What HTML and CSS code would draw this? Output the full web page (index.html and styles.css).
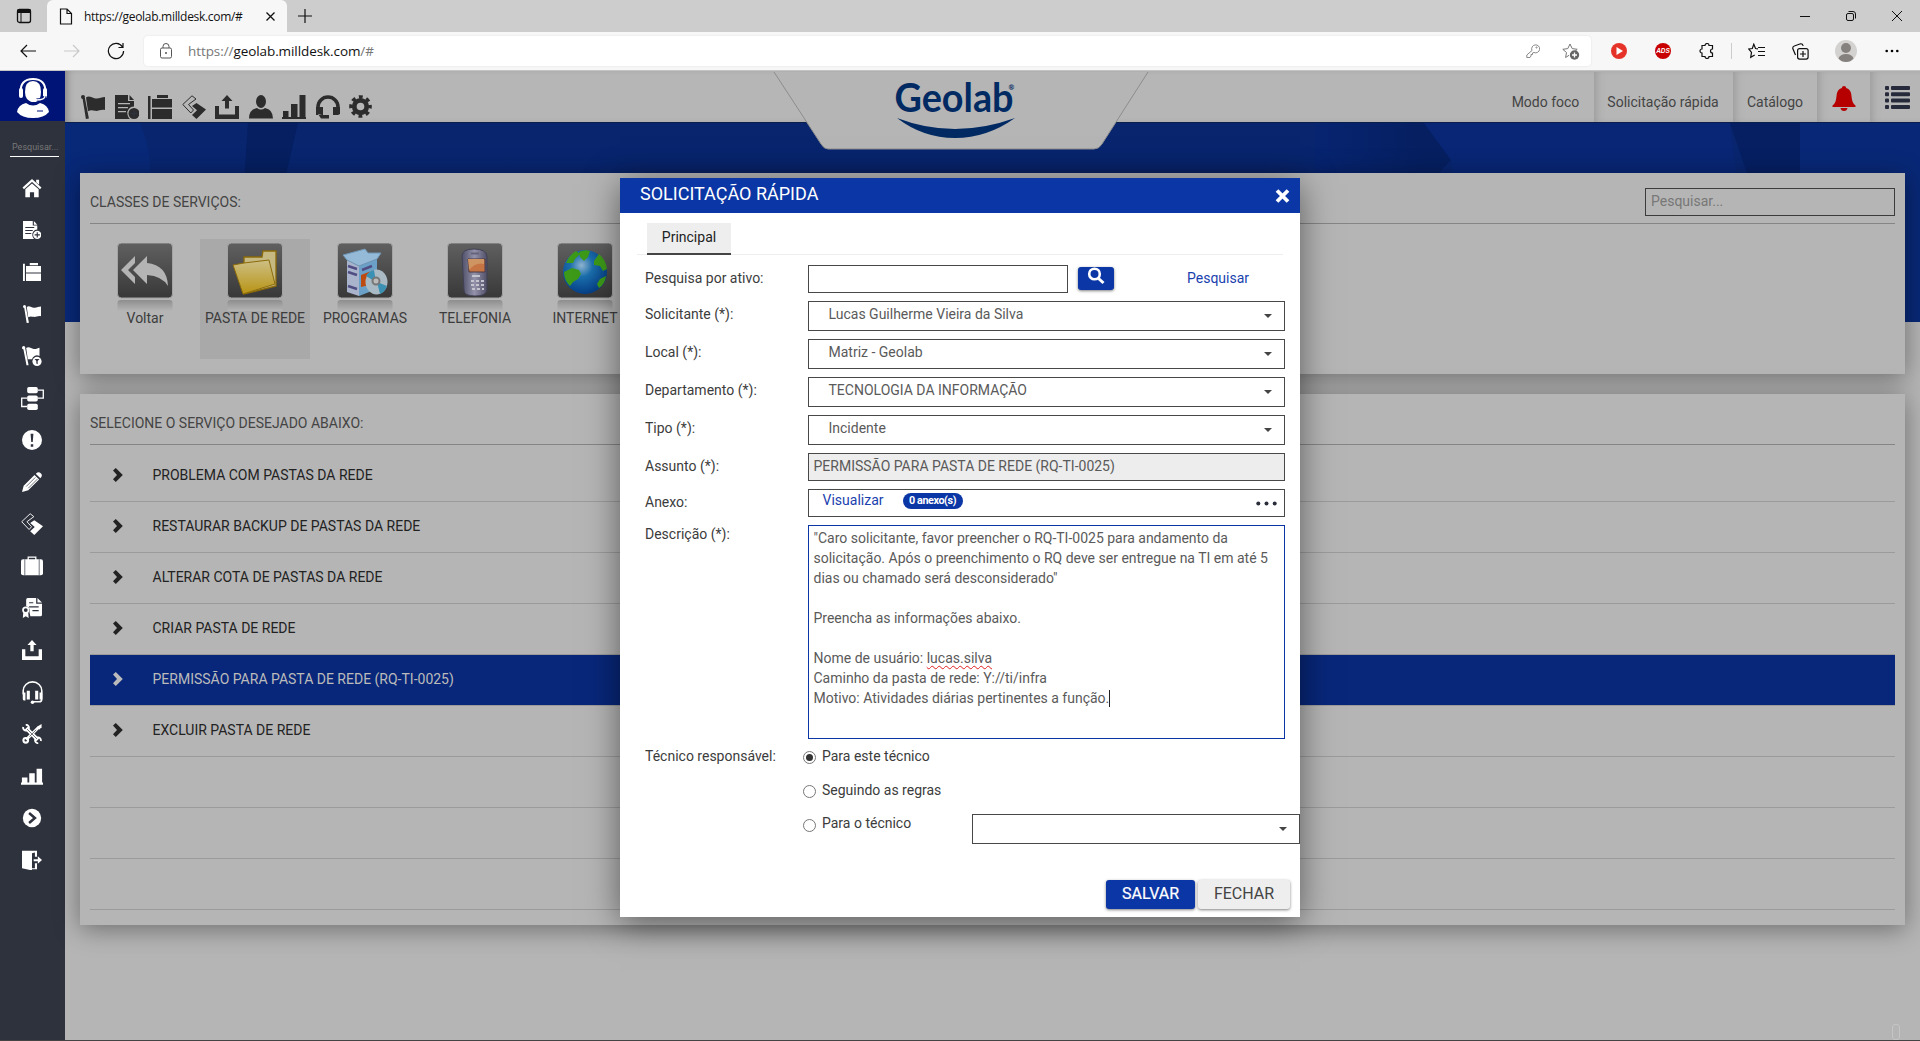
FILE: index.html
```html
<!DOCTYPE html>
<html lang="pt-BR">
<head>
<meta charset="utf-8">
<title>geolab.milldesk.com</title>
<link rel="stylesheet" href="styles.css">
</head>
<body>
<svg class="defs" width="0" height="0">
  <defs>
    <linearGradient id="tile" x1="0" y1="0" x2="0" y2="1"><stop offset="0" stop-color="#606060"/><stop offset="1" stop-color="#383838"/></linearGradient>
    <linearGradient id="refl" x1="0" y1="0" x2="0" y2="1"><stop offset="0" stop-color="#8e8e8e"/><stop offset="1" stop-color="#b5b5b5"/></linearGradient>
    <linearGradient id="gold" x1="0" y1="0" x2="0" y2="1"><stop offset="0" stop-color="#cdbf85"/><stop offset="1" stop-color="#b89414"/></linearGradient>
    <radialGradient id="sea" cx=".42" cy=".35" r=".65"><stop offset="0" stop-color="#8fb4cf"/><stop offset=".4" stop-color="#1a6eac"/><stop offset="1" stop-color="#063f86"/></radialGradient>
    <linearGradient id="fone" x1="0" y1="0" x2="1" y2="0"><stop offset="0" stop-color="#50506a"/><stop offset=".5" stop-color="#9392aa"/><stop offset="1" stop-color="#504f68"/></linearGradient>
    <linearGradient id="shade" x1="0" y1="0" x2="1" y2="0"><stop offset="0" stop-color="#072471"/><stop offset=".8" stop-color="#051f60"/><stop offset="1" stop-color="#051f60"/></linearGradient>
  </defs>
  <symbol id="frame" viewBox="0 0 56 70">
    <rect x=".5" y="0" width="55" height="55" rx="4" fill="url(#tile)" stroke="#a4a4a4" stroke-width="1"/>
    <path d="M.5 60q0-3 3-3h49q3 0 3 3v8H.5z" fill="url(#refl)"/>
  </symbol>
  <symbol id="flag" viewBox="0 0 24 24"><circle cx="2" cy="2" r="2"/><path d="M1.500 3h2.400l4 20.500l-3 .5zM5 2.500c3-2.500 6 .5 9.500 1c4 .4 6-1.500 9.500-1.500v13c-4-1-7 1.500-10 .8c-3-.8-4-1-7 .4z"/></symbol>
  <symbol id="doc" viewBox="0 0 24 24"><path fill-rule="evenodd" d="M0 0h13v6h6v5.500a6.500 6.500 0 0 0-6.500 8c.4 2 1.500 3.500 2.500 4.500H0zM3 8v1.300h12V8zm0 4v1.300h10V12zm0 4v1.300h8V16z"/><path d="M14.500 0 19 5h-4.500z"/><circle cx="19" cy="18.500" r="5.500"/><path class="cut" d="M19 15v7M15.500 18.500h7"/></symbol>
  <symbol id="case" viewBox="0 0 24 24"><path d="M0 1h2.500v23H0zM9 0h11v3H9zM4 4h20v8.500H4zM4 14h20v10H4z"/></symbol>
  <symbol id="tag" viewBox="0 0 24 24"><path d="M10 .8.8 9.500l8 8.500 2.700-3L6.500 9.500 14 4z" fill="none" stroke="currentColor" stroke-width="1"/><path d="M14.500 8 24 14.500 14.500 24 10 20l5-4.800-5-4.200z"/></symbol>
  <symbol id="up" viewBox="0 0 24 24"><path d="M0 11h4v8.500h16V11h4v13H0zM12 0l5.500 6h-3.500v7.500h-4V6H6.500z"/></symbol>
  <symbol id="user" viewBox="0 0 24 24"><ellipse cx="12" cy="6.500" rx="5" ry="6.500"/><path d="M0 23.500q0-9 8-10.500 4 3 8 0 8 1.500 8 10.500z"/></symbol>
  <symbol id="bars" viewBox="0 0 24 24"><path d="M0 22h24v2H0zM1 16h5.500v6H1zM9 9h6.500v13H9zM17.500 0h6v22h-6z"/></symbol>
  <symbol id="head" viewBox="0 0 24 24"><path d="M2 16v-4a10 10 0 0 1 20 0v7" fill="none" stroke="currentColor" stroke-width="3.500"/><path d="M0 12h7v8H0zM17 12h7v7l-2 1h-5zM2 19l3 4.500h8V20H6z"/></symbol>
  <symbol id="gear" viewBox="0 0 24 24"><circle cx="12" cy="12" r="6.500" fill="none" stroke="currentColor" stroke-width="5"/><circle cx="12" cy="12" r="10" fill="none" stroke="currentColor" stroke-width="3.600" stroke-dasharray="4 3.854" stroke-dashoffset="2"/></symbol>
  <symbol id="house" viewBox="0 0 24 24"><path d="M1.500 12.500 12 3l10.500 9.500" fill="none" stroke="currentColor" stroke-width="2.600"/><path d="M17 2h3.500v6L17 5zM12 6.500l8 7V23h-5.500v-6h-5v6H4v-9.500z"/></symbol>
  <symbol id="flagt" viewBox="0 0 24 24"><circle cx="2" cy="2" r="2"/><path d="M1.500 3h2.400l4 20h-2.500zM5 2.500c3-2.500 6 .5 9 1 3 .4 5-1 7-1.500v10a6 6 0 0 0-9 4l-5 0z"/><circle cx="18" cy="18.500" r="5.500"/><path class="dark" d="M15 15.500h6L18.800 18v4l-1.600-1v-3z"/></symbol>
  <symbol id="flow" viewBox="0 0 26 26"><g fill="none" stroke="currentColor" stroke-width="1.500"><path d="M19 3.500h6.200v9H19M7 12.500H.8V22H7"/></g><rect x="7" width="12" height="7" rx="2"/><rect x="7" y="9.500" width="12" height="7" rx="2"/><rect x="7" y="19" width="12" height="7" rx="2"/></symbol>
  <symbol id="bang" viewBox="0 0 24 24"><circle cx="12" cy="12" r="12"/><path class="dark" d="M10.300 4.500h3.400l-.8 10h-1.800zM10.500 17h3v3h-3z"/></symbol>
  <symbol id="pencil" viewBox="0 0 24 24"><path d="M0 24l2-7.500L15 3.500l5.500 5.500L7.500 22zM16.500 2l2-1.500q2-1 4 1t1 4L22 7.500z"/><path class="cut2" d="M5 17.500 16 6.500M7.500 19.500l11-11"/></symbol>
  <symbol id="bag" viewBox="0 0 26 24"><path d="M8.500 5V1.500h9V5" fill="none" stroke="currentColor" stroke-width="1.500"/><rect y="4" width="26" height="19" rx="2.500"/><path class="cut2" d="M4.500 4v19M21.500 4v19"/></symbol>
  <symbol id="cert" viewBox="0 0 24 24"><path fill-rule="evenodd" d="M5 2q0-2 2-2h10v7h7v13q0 2-2 2H10l-1-5q1-6-4-7zM8.500 5v1.300h5V5zm0 5v1.300H20V10zm4 4.500v1.300H20v-1.300z"/><path d="M18.500 0 24 5.500h-5.500z"/><circle cx="4.500" cy="14.500" r="3.300" fill="none" stroke="currentColor" stroke-width="2"/><path d="M1.500 18h6l.5 6-3.500-2L1 24z"/></symbol>
  <symbol id="head2" viewBox="0 0 24 26"><path d="M1.500 15v-4a10.500 10 0 0 1 21 0v9q0 3.500-3 3.500H13" fill="none" stroke="currentColor" stroke-width="1.800"/><path d="M1 13h3v9H2q-1-1-1-2zM5.500 11H9v10H5.500zM15 11h3.500v10H15zM20 13h3v8h-3z"/><circle cx="12" cy="24" r="2"/></symbol>
  <symbol id="tools" viewBox="0 0 24 24"><g fill="none" stroke="currentColor"><path stroke-width="4.500" d="M5 5l14 14"/><path stroke-width="3.500" d="M20 4 5 19"/><path stroke-width="2.200" d="M1.500 3.500a3.500 3.500 0 1 0 3-2.500M22.500 20.500a3.500 3.500 0 1 0-3 2.500"/><circle cx="4.500" cy="19.500" r="2.800" stroke-width="2.500"/></g><path d="M18.500 3l5-3v4l-3 3z"/><path class="cut2" d="M6 6l12 12M17 7l-8 8"/></symbol>
  <symbol id="sbars" viewBox="0 0 24 24"><path d="M0 19h24v2.500H0zM1 13.500h6V20H1zM9 9h6v11H9zM17 4h6v16h-6z"/></symbol>
  <symbol id="go" viewBox="0 0 24 24"><circle cx="12" cy="12" r="11"/><path d="M8.500 6l7 6-7 6" class="dline"/></symbol>
  <symbol id="exit" viewBox="0 0 24 24"><path d="M0 1h18v7h-2.500V3L12 4v18h3.500v-6H18v7h-6v1.500L0 22z"/><path d="M14 11h5V7.500L24 12l-5 4.500V13.500h-5z"/></symbol>
  <symbol id="chev" viewBox="0 0 10 14"><path d="M0 2.500 2.800 0l7 7-7 7L0 11.300 4 7z"/></symbol>
</svg>

<div class="tabstrip">
  <svg class="tabact" width="16" height="16" viewBox="0 0 16 16"><rect x="1.500" y="1.500" width="13" height="13" rx="2" fill="none" stroke="#111" stroke-width="1.300"/><path d="M1 1.500h14V5H1z" fill="#111"/><path d="M5 5v9" stroke="#111"/></svg>
  <div class="tab">
    <svg width="14" height="17" viewBox="0 0 14 17"><path d="M1.500 1H8l4.500 4.500V16h-11zM8 1v4.500h4.500" fill="none" stroke="#111" stroke-width="1.200"/></svg>
    <span>https://geolab.milldesk.com/#</span>
    <svg width="9" height="9" viewBox="0 0 9 9"><path d="M.5.5l8 8M8.500.5l-8 8" stroke="#111" stroke-width="1.300"/></svg>
  </div>
  <svg class="plus" width="14" height="14" viewBox="0 0 14 14"><path d="M7 0v14M0 7h14" stroke="#111" stroke-width="1.200"/></svg>
  <div class="winctl">
    <svg width="10" height="10" viewBox="0 0 10 10"><path d="M0 5.500h10" stroke="#111"/></svg>
    <svg width="10" height="10" viewBox="0 0 10 10" fill="none" stroke="#111"><rect x=".5" y="2.500" width="7" height="7" rx="1.500"/><path d="M2.500.5H7q2.500 0 2.500 2.500v4.500"/></svg>
    <svg width="10" height="10" viewBox="0 0 10 10"><path d="M0 0l10 10M10 0 0 10" stroke="#111"/></svg>
  </div>
</div>

<div class="toolbar">
  <svg width="16" height="14" viewBox="0 0 16 14" class="back"><path d="M16 7H1M7 1 1 7l6 6" fill="none" stroke="#111" stroke-width="1.200"/></svg>
  <svg width="16" height="14" viewBox="0 0 16 14" class="fwd"><path d="M0 7h15M9 1l6 6-6 6" fill="none" stroke="#c9c9c9" stroke-width="1.200"/></svg>
  <svg width="18" height="18" viewBox="0 0 18 18" class="reload"><path d="M15.500 5A7.600 7.600 0 1 0 16.600 9M16 1v4.500h-4.500" fill="none" stroke="#111" stroke-width="1.200"/></svg>
  <div class="address">
    <svg width="12" height="16" viewBox="0 0 12 16"><rect x=".5" y="5" width="11" height="10" rx="1.500" fill="none" stroke="#555"/><path d="M3 5V3.500a3 3 0 0 1 6 0V5" fill="none" stroke="#555"/><circle cx="6" cy="10" r="1" fill="#555"/></svg>
    <span class="url"><i>https://</i>geolab.milldesk.com<i>/#</i></span>
    <svg class="key" width="14" height="14" viewBox="0 0 14 14" fill="none" stroke="#888"><path d="M6 6.500A4 4 0 1 1 8 8.500L6.500 9v1.500H5V12l-1 1.500H.8V11z"/><circle cx="10.500" cy="3.500" r=".6"/></svg>
    <svg class="fav" width="18" height="17" viewBox="0 0 18 17"><path d="M8 1l2.200 4.600 5 .7-3.500 3.400M7 12.300 3.600 14.500l.9-5L.8 6.300l5-.7L8 1" fill="none" stroke="#777"/><circle cx="12.500" cy="12" r="4.700" fill="#666"/><path d="M12.500 9.500v5M10 12h5" stroke="#fff" stroke-width="1.300"/></svg>
  </div>
  <div class="ext">
    <svg width="16" height="16" viewBox="0 0 16 16"><circle cx="8" cy="8" r="8" fill="#e5332a"/><path d="M5.500 4l6.500 4-6.500 4z" fill="#fff"/></svg>
    <span class="ads">ADS</span>
    <svg class="puzzle" width="16" height="16" viewBox="0 0 16 16"><path d="M3 2.500h3a2 2 0 0 1 4 0h3.500v3.500a1.800 1.800 0 1 0 0 4v3.500H10a2 2 0 0 1-4 0H3V10a2 2 0 0 1 0-4z" fill="none" stroke="#111" stroke-width="1.200"/></svg>
    <b class="vsep"></b>
    <svg class="star" width="17" height="16" viewBox="0 0 17 16"><path d="M10 5.800 7.500 5.500 5.800 1.200 4.300 5.500.8 6l2.700 3.300-.8 5 4-2.300M10 4.500h7M10 8.500h7M10 12.500h7" fill="none" stroke="#111" stroke-width="1.200"/></svg>
    <svg class="coll" width="17" height="17" viewBox="0 0 17 17"><rect x="5.600" y="5.600" width="10.500" height="10.500" rx="2" fill="none" stroke="#111" stroke-width="1.200"/><path d="M3.500 12 .8 5.500Q.5 3.500 2.300 3L8.500.8q2-.3 2.700 2M11 8v6M8 11h6" fill="none" stroke="#111" stroke-width="1.200"/></svg>
    <svg class="avatar" width="22" height="22" viewBox="0 0 22 22"><circle cx="11" cy="11" r="11" fill="#d4d2d0"/><circle cx="11" cy="8" r="5" fill="#85817e"/><path d="M3.500 18.500q1.500-4.500 7.500-4.500t7.500 4.500Q15.500 22 11 22t-7.500-3.500" fill="#85817e"/></svg>
    <svg width="14" height="4" viewBox="0 0 14 4"><circle cx="1.700" cy="2" r="1.300"/><circle cx="7" cy="2" r="1.300"/><circle cx="12.300" cy="2" r="1.300"/></svg>
  </div>
</div>

<div class="app">
  <nav class="side">
    <div class="brand"><svg width="32" height="40" viewBox="0 0 32 40"><path d="M8 14Q8 3 16 3t8 11-8 10-8-10" fill="#fff"/><path d="M3.500 15Q3 1 16 1t12.500 14" fill="none" stroke="#fff" stroke-width="2"/><rect x="2" y="10" width="4" height="10" rx="2" fill="#fff"/><rect x="26" y="10" width="4" height="10" rx="2" fill="#fff"/><path d="M28 18q0 4-9 4" fill="none" stroke="#001478" stroke-width="3"/><path d="M28 18q0 4-9 4" fill="none" stroke="#fff" stroke-width="1.400"/><rect x="13" y="20" width="7" height="4" rx="2" fill="#fff"/><path d="M0 34q1-7 9-9 7 5 14 0 8 2 9 9-5 6-16 6T0 34" fill="#fff"/><path d="M20 33h6" stroke="#001478"/></svg></div>
    <div class="find">Pesquisar...</div>
    <a><svg><use href="#house"/></svg></a>
    <a><svg class="s"><use href="#doc"/></svg></a>
    <a><svg class="s"><use href="#case"/></svg></a>
    <a><svg class="s"><use href="#flag"/></svg></a>
    <a><svg><use href="#flagt"/></svg></a>
    <a><svg class="l"><use href="#flow"/></svg></a>
    <a><svg><use href="#bang"/></svg></a>
    <a><svg><use href="#pencil"/></svg></a>
    <a><svg class="m"><use href="#tag"/></svg></a>
    <a><svg class="m"><use href="#bag"/></svg></a>
    <a><svg><use href="#cert"/></svg></a>
    <a><svg><use href="#up"/></svg></a>
    <a><svg class="l"><use href="#head2"/></svg></a>
    <a><svg><use href="#tools"/></svg></a>
    <a><svg class="m"><use href="#sbars"/></svg></a>
    <a><svg><use href="#go"/></svg></a>
    <a><svg><use href="#exit"/></svg></a>
  </nav>

  <main class="main">
    <header class="top">
      <div class="quick">
        <svg><use href="#flag"/></svg><svg><use href="#doc"/></svg><svg><use href="#case"/></svg><svg><use href="#tag"/></svg><svg><use href="#up"/></svg><svg><use href="#user"/></svg><svg><use href="#bars"/></svg><svg><use href="#head"/></svg><svg class="g"><use href="#gear"/></svg>
      </div>
      <div class="menu">
        <span class="c1">Modo foco</span><span class="c2">Solicitação rápida</span><span class="c3">Catálogo</span>
        <span class="c4"><svg width="24" height="25" viewBox="0 0 24 25"><path d="M12 0q2 0 2.200 2 5 1.500 5.300 8 .3 7 4 9.500V21H.5v-1.500q3.700-2.500 4-9.500Q4.800 3.500 9.800 2 10 0 12 0M8.500 22h7q-.5 3-3.500 3t-3.500-3" fill="#b60000"/></svg></span>
        <span class="c5"><svg width="25" height="23" viewBox="0 0 25 23" fill="#262a3a"><g id="lr"><rect width="4" height="4" rx="1"/><rect x="6" width="19" height="4" rx="1"/></g><use href="#lr" y="6.300"/><use href="#lr" y="12.600"/><use href="#lr" y="19"/></svg></span>
      </div>
    </header>
    <div class="banner"><svg width="1855" height="199" viewBox="0 0 1855 199"><path d="M0 0h75q18 45 5 70L60 199H0z" fill="#082878"/><path d="M183 0h50l-14 60h-40z" fill="#051f60"/><path d="M1250 0h109l27 37-20 22h-116z" fill="url(#shade)"/><path d="M1359 0h306l25 199h-270l-34-162z" fill="#082675"/><path d="M1665 0h70v199h-40l-10-140z" fill="#051f62"/><path d="M1735 0h120v199h-120z" fill="#082877"/></svg></div>
    <svg class="notch" width="400" height="84" viewBox="0 0 400 84">
      <path d="M14 1 61 73q3 5 7 5h266q5 0 8-5L388 1" fill="#b5b5b5"/>
      <path d="M14 1 61 73q3 5 7 5h266q5 0 8-5L388 1" fill="none" stroke="#8d8d8d" stroke-width="1"/>
      <text x="134.500" y="41" class="logo"><tspan textLength="119" lengthAdjust="spacingAndGlyphs">Geolab</tspan><tspan class="reg" dx="-5" dy="-22">®</tspan></text>
      <path d="M137 47q57 22 118 0-28 20-60 20t-58-20" fill="#012a63"/>
    </svg>

    <section class="panel classes">
      <div class="phead"><h2>CLASSES DE SERVIÇOS:</h2><div class="psearch">Pesquisar...</div></div>
      <div class="tiles">
        <div class="tile"><svg viewBox="0 0 56 70"><use href="#frame"/><path d="M4 27 18 13v7l-7 7 7 7v7zM16 27 30 13v7q20 2 21 23-6-10-21-11v9z" fill="#b4b4b4"/></svg>Voltar</div>
        <div class="tile on"><svg viewBox="0 0 56 70"><use href="#frame"/><path d="M17 14h18l1-6h13v35L17 51z" fill="#c5b881" stroke="#8b6a0a" stroke-width="1.300"/><path d="M6 22l11-2 25-3 6 24-32 10z" fill="url(#gold)" stroke="#8b6a0a"/></svg>PASTA DE REDE</div>
        <div class="tile"><svg viewBox="0 0 56 70"><use href="#frame"/><path d="M10 17l12 6v30l-12-4z" fill="#a9b4cc"/><path d="M22 23l18-7v30l-18 7z" fill="#6ba1c8"/><path d="M10 17 6 12l22-6 3 4 13 0-4 6-18 7z" fill="#95bad8" stroke="#7196b5"/><path d="M24 32l13-5v14l-13 3z" fill="#bd4a10"/><path d="M11 23l9 3M11 29l9 3M11 43l9 3M25 27l10-4" stroke="#514d83" stroke-width="2.500"/><ellipse cx="39.500" cy="39" rx="11" ry="12.500" fill="#aabac4"/><path d="M39 39 29 33q3-5 8-6zM40 39l10 4q-2 6-7 8z" fill="#3b91b4"/><circle cx="39" cy="38" r="3.500" fill="#bbb" stroke="#777" stroke-width="2"/></svg>PROGRAMAS</div>
        <div class="tile"><svg viewBox="0 0 56 70"><use href="#frame"/><path d="M15 13q0-7 12-7t13 7v34q-1 6-12 6-11 0-11-6z" fill="url(#fone)" stroke="#414155"/><path d="M21 16h17v13H22z" fill="#c77445" stroke="#4b3942"/><path d="M22 27q7-8 15-6v-5H21z" fill="#ce9563"/><path d="M25 33h8M24 38h3m2 0h3m2 0h3M24 42h3m2 0h3m2 0h3M25 46h3m2 0h3m2 0h2" stroke="#c4c4cf" stroke-width="2"/><path d="M24 10.500h8" stroke="#65647c" stroke-width="2"/></svg>TELEFONIA</div>
        <div class="tile"><svg viewBox="0 0 56 70"><use href="#frame"/><circle cx="28" cy="29" r="22" fill="url(#sea)"/><path d="M9 20q3-8 10-12l4 3-5 5-2 4zM7 29l8-4 7 2 2 4-3 5-5 3-3 4q-6-6-6-14M22 9q6-3 11-1l-2 6-4 4-4-4zM37 18l5-7q7 6 8 15l-4 2-3-5-6-1zM43 36l6-3q-1 8-7 12l-2-4z" fill="#3d9a18"/></svg>INTERNET</div>
      </div>
    </section>

    <section class="panel services">
      <div class="phead"><h2>SELECIONE O SERVIÇO DESEJADO ABAIXO:</h2></div>
      <ul>
        <li><svg><use href="#chev"/></svg>PROBLEMA COM PASTAS DA REDE</li>
        <li><svg><use href="#chev"/></svg>RESTAURAR BACKUP DE PASTAS DA REDE</li>
        <li><svg><use href="#chev"/></svg>ALTERAR COTA DE PASTAS DA REDE</li>
        <li><svg><use href="#chev"/></svg>CRIAR PASTA DE REDE</li>
        <li class="sel"><svg><use href="#chev"/></svg>PERMISSÃO PARA PASTA DE REDE (RQ-TI-0025)</li>
        <li><svg><use href="#chev"/></svg>EXCLUIR PASTA DE REDE</li>
        <li></li><li></li><li></li>
      </ul>
    </section>
    <div class="pill"></div>
  </main>
</div>

<div class="modal">
  <div class="mhead">SOLICITAÇÃO RÁPIDA<svg width="15" height="14" viewBox="0 0 15 14"><path d="M2 1.500l11 11M13 1.500l-11 11" stroke="#fff" stroke-width="3.800"/></svg></div>
  <div class="tabs"><span>Principal</span></div>
  <div class="form">
    <div class="row h28"><label>Pesquisa por ativo:</label><div class="box short"></div><div class="lens"><svg width="18" height="18" viewBox="0 0 18 18"><circle cx="7.500" cy="7" r="5.300" fill="none" stroke="#fff" stroke-width="2.600"/><path d="M11 11l5.500 5" stroke="#fff" stroke-width="3"/></svg></div><span class="link">Pesquisar</span></div>
    <div class="row"><label>Solicitante (*):</label><div class="box dd">Lucas Guilherme Vieira da Silva</div></div>
    <div class="row"><label>Local (*):</label><div class="box dd">Matriz - Geolab</div></div>
    <div class="row"><label>Departamento (*):</label><div class="box dd">TECNOLOGIA DA INFORMAÇÃO</div></div>
    <div class="row"><label>Tipo (*):</label><div class="box dd">Incidente</div></div>
    <div class="row h28"><label>Assunto (*):</label><div class="box off">PERMISSÃO PARA PASTA DE REDE (RQ-TI-0025)</div></div>
    <div class="row h28"><label>Anexo:</label><div class="box files"><span class="link">Visualizar</span><span class="badge">0 anexo(s)</span><svg width="21" height="5" viewBox="0 0 21 5" fill="#2a2d3a"><circle cx="2.300" cy="2.500" r="2"/><circle cx="10.500" cy="2.500" r="2"/><circle cx="18.700" cy="2.500" r="2"/></svg></div></div>
    <div class="row desc"><label>Descrição (*):</label><div class="box area">"Caro solicitante, favor preencher o RQ-TI-0025 para andamento da<br>solicitação. Após o preenchimento o RQ deve ser entregue na TI em até 5<br>dias ou chamado será desconsiderado"<br><br>Preencha as informações abaixo.<br><br>Nome de usuário: <u>lucas.silva</u><br>Caminho da pasta de rede: Y://ti/infra<br>Motivo: Atividades diárias pertinentes a função.<b class="caret"></b></div></div>
  </div>
  <div class="tech">
    <label>Técnico responsável:</label>
    <div class="opts">
      <div class="opt"><i class="radio on"></i>Para este técnico</div>
      <div class="opt"><i class="radio"></i>Seguindo as regras</div>
      <div class="opt"><i class="radio"></i><span class="w">Para o técnico</span><div class="box dd"></div></div>
    </div>
  </div>
  <div class="foot"><span class="btn save">SALVAR</span><span class="btn close">FECHAR</span></div>
</div>
</body>
</html>
```
FILE: styles.css
```css
* { box-sizing: border-box; }
body { margin: 0; width: 1920px; height: 1041px; overflow: hidden; position: relative; display: flex; flex-direction: column; font: 14px/20px Roboto, "Liberation Sans", sans-serif; color: #3c3c3c; background: #b5b5b5; }
svg { display: block; flex: none; }
.defs { position: absolute; }

/* browser chrome */
.tabstrip { height: 32px; background: #cdcdcd; display: flex; align-items: center; font: 12px "Open Sans", sans-serif; color: #111; }
.tabact { margin-left: 16px; }
.tab { width: 240px; height: 32px; margin-left: 15px; padding: 0 12px; background: #f7f7f7; border-radius: 6px 6px 0 0; display: flex; align-items: center; }
.tab span { margin-left: 11px; flex: 1; white-space: nowrap; letter-spacing: -.3px; }
.plus { margin-left: 11px; }
.winctl { margin-left: auto; display: flex; gap: 36px; padding-right: 18px; }
.toolbar { height: 39px; background: #f7f7f7; border-bottom: 1px solid #c4c4c4; display: flex; align-items: center; }
.back { margin-left: 20px; }
.fwd { margin-left: 28px; }
.reload { margin-left: 27px; }
.address { margin-left: 19px; width: 1447px; height: 30px; background: #fff; border-radius: 4px; box-shadow: 0 0 2px #ddd; display: flex; align-items: center; padding: 0 11px 0 16px; }
.url { margin-left: 16px; flex: 1; font: 13.5px "Open Sans", sans-serif; letter-spacing: -.08px; color: #111; }
.url i { font-style: normal; color: #777; }
.fav { margin-left: 22px; }
.ext { flex: 1; margin-left: 20px; display: flex; align-items: center; }
.ads { width: 16px; height: 16px; margin-left: 28px; border-radius: 50%; background: #c90000; color: #fff; font: italic bold 6.500px/16px "Liberation Sans", sans-serif; text-align: center; }
.puzzle { margin-left: 28px; }
.vsep { width: 1px; height: 16px; margin: 0 16px; background: #ccc; }
.coll { margin-left: 27px; }
.avatar { margin: 0 28px 0 26px; }

/* application */
.app { flex: 1; display: flex; min-height: 0; border-bottom: 1px solid #444; }
.side { width: 65px; background: #2e323d; color: #fff; fill: #fff; display: flex; flex-direction: column; flex: none; }
.brand { height: 50px; background: #001478; display: flex; justify-content: center; align-items: center; padding-top: 3px; }
.find { height: 46px; margin: 0 6px 0 10px; position: relative; padding: 16px 0 0 2px; font-size: 9px; line-height: 20px; color: #777; white-space: nowrap; }
.find::after { content: ""; display: block; height: 1px; background: #fff; margin: -1px 0 0 -2px; }
.side a { height: 42px; display: flex; align-items: center; justify-content: center; padding-right: 1px; }
.side a svg { width: 20px; height: 20px; }
.side a .s { width: 18px; height: 18px; }
.side a .m { width: 22px; height: 22px; }
.side a .l { width: 23px; height: 23px; }
.cut { stroke: #2e323d; stroke-width: 1.500; fill: none; }
.cut2 { stroke: #2e323d; stroke-width: .8; fill: none; }
.dark { fill: #2e323d; }
.dline { fill: none; stroke: #2e323d; stroke-width: 3; }

.main { flex: 1; position: relative; display: flex; flex-direction: column; background: #b5b5b5; }
.top { height: 52px; flex: none; background: #b6b6b6; border-bottom: 1px solid #0b1f4d; display: flex; justify-content: space-between; box-shadow: inset 6px 0 8px -5px #777; }
.quick { display: flex; gap: 9.500px; padding: 24px 0 0 16px; fill: #2c2c2c; color: #2c2c2c; }
.quick svg { width: 24px; height: 24px; }
.quick .g { width: 23px; height: 23px; }
.quick .cut { stroke: #b6b6b6; }
.menu { display: flex; color: #444; padding-top: 1px; }
.menu span { display: flex; align-items: center; justify-content: center; padding-top: 9px; box-shadow: inset 10px 0 8px -8px #999; }
.menu .c1 { width: 98px; padding-left: 1px; box-shadow: none; }
.menu .c2 { width: 139px; padding-right: 1px; }
.menu .c3 { width: 84px; }
.menu .c4 { width: 53px; padding-top: 3px; }
.menu .c5 { width: 50px; padding: 1px 0 0 5px; }
.banner { height: 199px; flex: none; background: linear-gradient(180deg, #08256e, #072471 100%); }
.notch { position: absolute; left: 695px; top: 0; }
.logo { font: bold 41px Lato, sans-serif; fill: #012a63; }
.reg { font: bold 7px Lato, sans-serif; fill: #012a63; }

.panel { background: #b5b5b5; margin: 0 15px; padding: 0 10px; box-shadow: 0 4px 24px rgba(0,0,0,.4); position: relative; flex: none; }
.classes { margin-top: -149px; height: 201px; }
.services { margin-top: 20px; height: 531px; }
.phead { height: 51px; border-bottom: 1px solid #858585; display: flex; justify-content: space-between; }
h2 { margin: 19px 0 0; font: 14px/20px Roboto, sans-serif; color: #444; letter-spacing: 0; }
.psearch { width: 250px; height: 28px; margin-top: 15px; border: 1px solid #3c3c3c; padding: 2px 5px; color: #777; }
.tiles { display: flex; padding-top: 15px; }
.tile { width: 110px; height: 120px; display: flex; flex-direction: column; align-items: center; white-space: nowrap; padding-top: 4px; color: #3c3c3c; }
.tile svg { width: 56px; height: 70px; margin-bottom: -5px; }
.tile.on { background: #a9a9a9; }
ul { list-style: none; margin: 0; padding: 6px 0 0; }
li { height: 51px; border-bottom: 1px solid #9b9b9b; display: flex; align-items: center; color: #222; fill: #222; padding: 0 0 3px 23px; }
li svg { width: 10px; height: 14px; margin-right: 29.500px; }
li.sel { background: #08277a; color: #bbb; fill: #bbb; }
.pill { position: absolute; right: 20px; bottom: 0; width: 8px; height: 16px; border: 1px solid #c5c5c5; border-radius: 3px; }

/* dialog window */
.modal { position: absolute; left: 620px; top: 178px; width: 680px; height: 739px; background: #fff; box-shadow: 0 6px 32px rgba(0,0,0,.5); display: flex; flex-direction: column; }
.mhead { height: 35px; flex: none; background: #0b36a5; color: #fff; font-size: 18px; line-height: 32px; padding: 0 10px 0 20px; display: flex; justify-content: space-between; align-items: flex-start; }
.mhead svg { margin-top: 11px; }
.tabs { height: 42px; flex: none; margin: 0 17px; padding: 10px 0 0 10px; border-bottom: 1px solid #eee; }
.tabs span { display: block; width: 84px; height: 32px; background: #eee; border-bottom: 2px solid #444; text-align: center; line-height: 28px; color: #222; }
.form { display: flex; flex-direction: column; gap: 8px; padding: 10px 0 0 25px; flex: none; }
.row { display: flex; height: 30px; }
.row.h28 { height: 28px; }
.row.desc { height: 214px; }
.row label { width: 163px; line-height: 27px; }
.row.h28 label { line-height: 26px; }
.row.desc label { line-height: 18px; }
.box { width: 477px; border: 1px solid #484848; color: #5a5a5a; position: relative; white-space: nowrap; }
.box.short { width: 260px; }
.lens { width: 36px; height: 23px; margin: 2px 0 0 10px; background: #0b36a5; border-radius: 3px; box-shadow: 0 1px 3px rgba(0,0,0,.5); display: flex; justify-content: center; }
.link { color: #1a3fae; line-height: 26px; }
.lens + .link { margin-left: 73px; }
.dd { padding-left: 19.500px; line-height: 24px; }
.dd::after { content: ""; position: absolute; right: 12px; top: 12px; border: 4px solid transparent; border-top: 4px solid #444; border-bottom: 0; }
.off { background: #ededed; padding-left: 4.500px; line-height: 24px; }
.files { display: flex; padding: 0 7px 0 13.500px; }
.files .link { line-height: 20px; }
.files svg { margin: 11px 0 0 auto; }
.badge { margin: 3px 0 0 19px; width: 60px; height: 16px; border-radius: 8px; background: #0b36a5; color: #fff; font-size: 10.800px; font-weight: 700; letter-spacing: -.4px; line-height: 16px; text-align: center; }
.area { border-color: #0b36a5; padding: 2px 4.500px; }
.area u { text-decoration: underline wavy #e02020 1px; text-underline-offset: 2px; text-decoration-skip-ink: none; }
.caret { display: inline-block; width: 1px; height: 17px; background: #222; vertical-align: -4px; }
.tech { display: flex; padding-left: 25px; height: 141px; flex: none; }
.tech label { width: 158px; line-height: 34px; }
.opt { display: flex; height: 34px; line-height: 34px; }
.opt + .opt + .opt { line-height: 32px; }
.radio { width: 13px; height: 13px; border: 1px solid #777; border-radius: 50%; margin: 12px 6px 0 0; padding: 2px; }
.radio.on::after { content: ""; display: block; width: 7px; height: 7px; border-radius: 50%; background: #333; }
.opt .w { width: 150px; }
.opt .box { width: 328px; height: 30px; margin-top: 7px; }
.foot { display: flex; gap: 3px; justify-content: flex-end; padding-right: 10px; }
.btn { height: 29px; border-radius: 3px; font-size: 16px; line-height: 27px; text-align: center; box-shadow: 0 1px 3px rgba(0,0,0,.5); }
.save { width: 89px; background: #0b36a5; color: #fff; -webkit-text-stroke: .2px #fff; }
.close { width: 92px; background: #eee; color: #444; }
```
